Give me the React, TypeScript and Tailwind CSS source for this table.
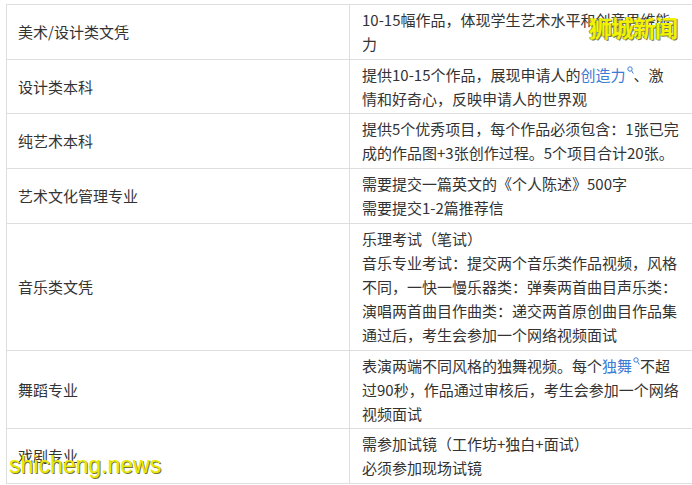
import React from "react";

const Mag = () => (
  <svg width="7" height="9" viewBox="0 0 7 9" className="inline-block align-top mt-[3px] ml-[1px]">
    <circle cx="3" cy="3" r="2.2" fill="none" stroke="#3f7fd6" strokeWidth="1" />
    <line x1="4.6" y1="4.6" x2="6.3" y2="7.6" stroke="#3f7fd6" strokeWidth="1" />
  </svg>
);

const Link = ({ children }: { children: React.ReactNode }) => (
  <>
    <span className="text-[#3a7bd5]">{children}</span>
    <Mag />
  </>
);

type Row = { left: string; lines: React.ReactNode[]; h: string };

const rows: Row[] = [
  { left: "美术/设计类文凭", lines: ["10-15幅作品，体现学生艺术水平和创意思维能", "力"], h: "h-[55px]" },
  {
    left: "设计类本科",
    lines: [
      <>提供10-15个作品，展现申请人的<Link>创造力</Link>、激</>,
      "情和好奇心，反映申请人的世界观",
    ],
    h: "h-[54px]",
  },
  {
    left: "纯艺术本科",
    lines: ["提供5个优秀项目，每个作品必须包含：1张已完", "成的作品图+3张创作过程。5个项目合计20张。"],
    h: "h-[55px]",
  },
  {
    left: "艺术文化管理专业",
    lines: ["需要提交一篇英文的《个人陈述》500字", "需要提交1-2篇推荐信"],
    h: "h-[55px]",
  },
  {
    left: "音乐类文凭",
    lines: [
      "乐理考试（笔试）",
      "音乐专业考试：提交两个音乐类作品视频，风格",
      "不同，一快一慢乐器类：弹奏两首曲目声乐类：",
      "演唱两首曲目作曲类：递交两首原创曲目作品集",
      "通过后，考生会参加一个网络视频面试",
    ],
    h: "h-[127px]",
  },
  {
    left: "舞蹈专业",
    lines: [
      <>表演两端不同风格的独舞视频。每个<Link>独舞</Link>不超</>,
      "过90秒，作品通过审核后，考生会参加一个网络",
      "视频面试",
    ],
    h: "h-[78px]",
  },
  {
    left: "戏剧专业",
    lines: ["需参加试镜（工作坊+独白+面试）", "必须参加现场试镜"],
    h: "h-[55px]",
  },
];

export default function App() {
  return (
    <div
      className="relative w-[692px] h-[485px] overflow-hidden bg-white text-[#333] text-[15px] leading-[24px]"
      style={{ fontFamily: '"Noto Sans CJK SC", "Noto Sans", sans-serif' }}
    >
      <div className="ml-[6px] mt-[4px] w-[700px] border-l border-t border-[#dedede]">
        {rows.map((r, i) => (
          <div key={i} className={`flex ${r.h} border-b border-[#dedede]`}>
            <div className="w-[343px] shrink-0 border-r border-[#dedede] flex items-center pl-[11px]">
              {r.left}
            </div>
            <div className="flex-1 flex flex-col justify-center pl-[12px]">
              {r.lines.map((l, j) => (
                <div key={j} className="whitespace-nowrap">
                  {l}
                </div>
              ))}
            </div>
          </div>
        ))}
      </div>

      <div
        className="absolute left-[589px] top-[12px] text-[23px] leading-[30px] font-bold text-[#f3f300] tracking-[-1px] [text-shadow:1px_1px_0_#7a7a45,-1px_0_0_#9a9a60]"
      >
        狮城新闻
      </div>
      <div
        className="absolute left-[9px] top-[450px] text-[23px] leading-[30px] text-[#e8e800] [text-shadow:1px_1px_0_#77773a]"
        style={{ fontFamily: '"Liberation Sans", Arial, sans-serif' }}
      >
        shicheng.news
      </div>
    </div>
  );
}
